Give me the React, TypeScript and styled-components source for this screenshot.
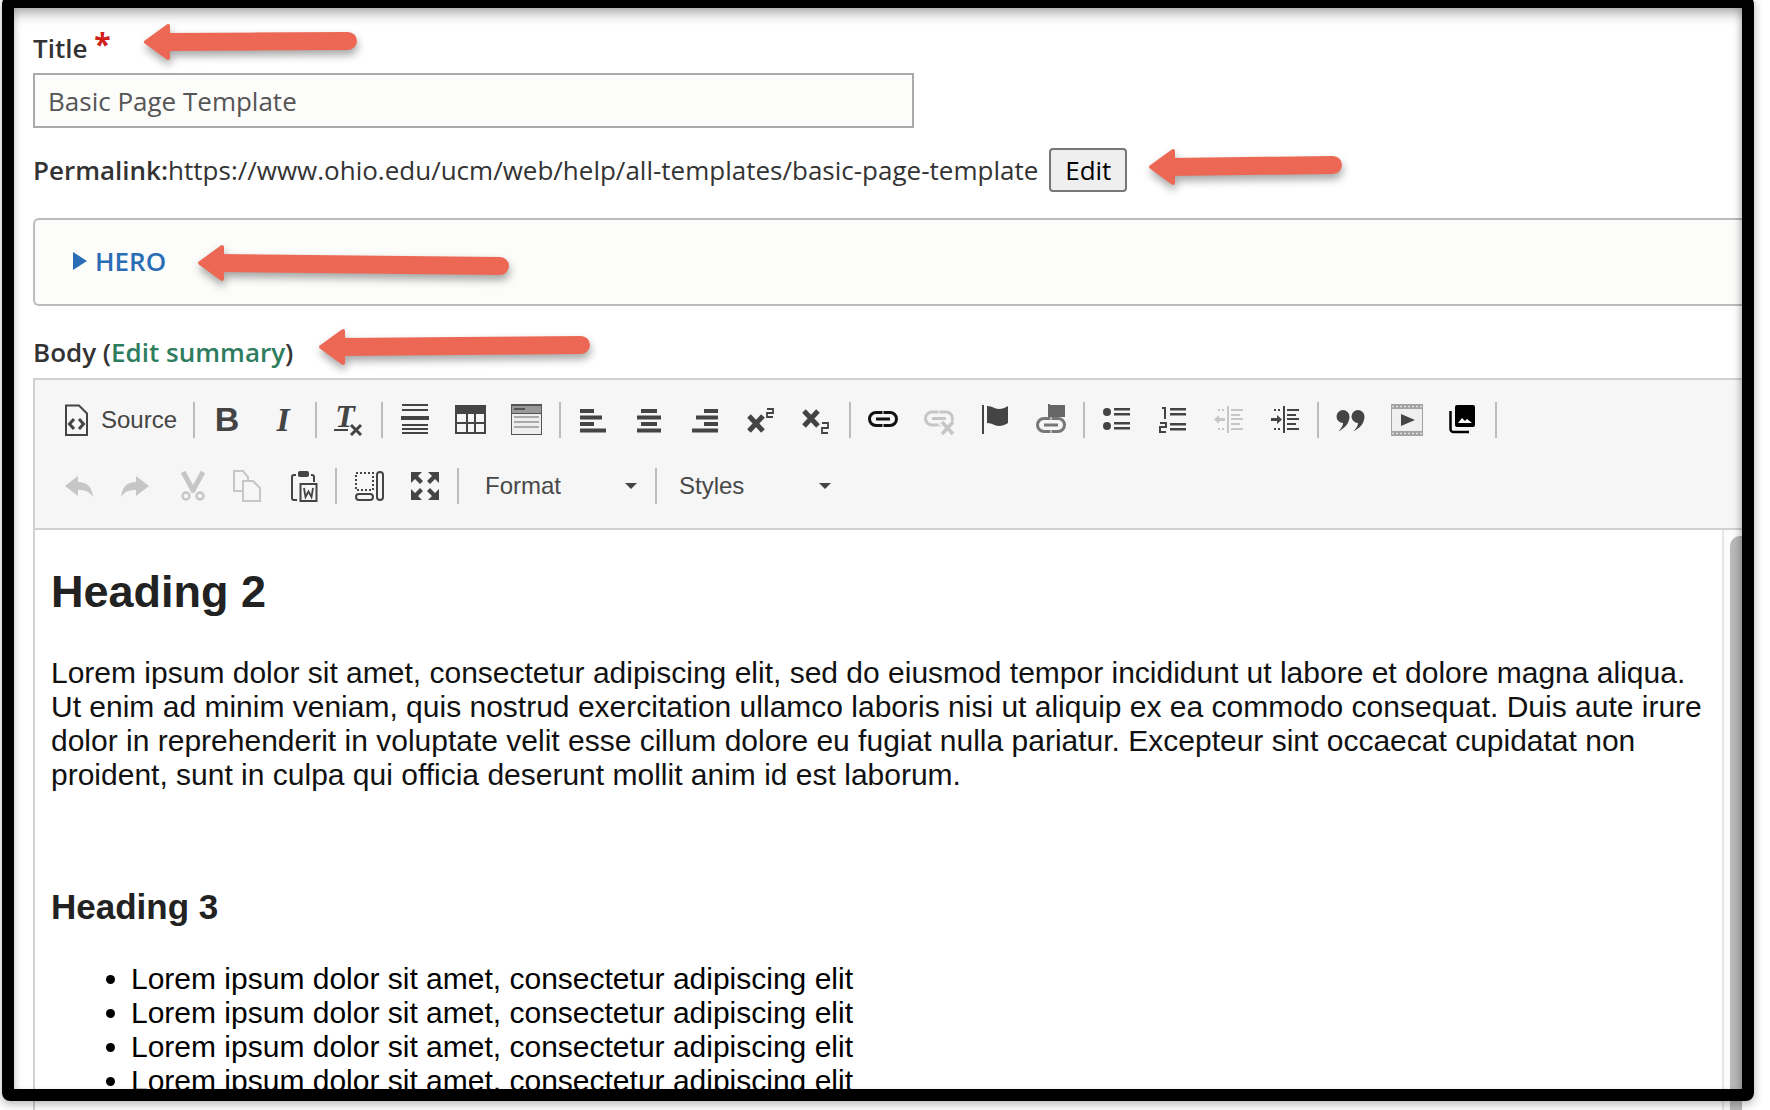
import React from 'react';
import styled, { createGlobalStyle } from 'styled-components';

const GlobalStyle = createGlobalStyle`
  html, body { margin: 0; padding: 0; background: #fff; }
`;

const UI_FONT = `"Open Sans", "Noto Sans", sans-serif`;
const EDITOR_FONT = `"Liberation Sans", Arial, sans-serif`;

type IconProps = { children: React.ReactNode };
const Svg = ({ children }: IconProps) => (
  <svg width="32" height="32" viewBox="0 0 32 32" fill="currentColor" aria-hidden="true">
    {children}
  </svg>
);
// taller box for the icons that hold a real letter, so the letter has room
const TallSvg = ({ children }: IconProps) => (
  <svg width="32" height="48" viewBox="0 -8 32 48" fill="currentColor" aria-hidden="true">
    {children}
  </svg>
);

const SourceIcon = () => (
  <Svg>
    <path d="M6 1.500h13l8 8V31H6z" fill="none" stroke="currentColor" strokeWidth="2" />
    <path d="M14 15l-4.500 5 4.500 5M19 15l4.500 5-4.500 5" fill="none" stroke="currentColor" strokeWidth="3" />
  </Svg>
);
const BoldIcon = () => (
  <TallSvg>
    <text x="16" y="27" textAnchor="middle" fontFamily={EDITOR_FONT} fontWeight="700" fontSize="34">B</text>
  </TallSvg>
);
const ItalicIcon = () => (
  <TallSvg>
    <text x="16" y="27" textAnchor="middle" fontFamily="'Liberation Serif', serif" fontWeight="700" fontStyle="italic" fontSize="34">I</text>
  </TallSvg>
);
const RemoveFormatIcon = () => (
  <TallSvg>
    <text x="12" y="23" textAnchor="middle" fontFamily="'Liberation Serif', serif" fontWeight="700" fontStyle="italic" fontSize="32">T</text>
    <rect x="1" y="25" width="14" height="2" />
    <path d="M18 21l10 10M28 21L18 31" stroke="currentColor" strokeWidth="3" fill="none" />
  </TallSvg>
);
const RuleIcon = () => (
  <Svg>
    <rect x="3" y="0" width="26" height="2" />
    <rect x="3" y="5" width="26" height="2" />
    <rect x="2" y="12" width="28" height="4" />
    <rect x="3" y="20" width="26" height="2" />
    <rect x="3" y="24" width="26" height="2" />
    <rect x="3" y="28" width="26" height="2" />
  </Svg>
);
const TableIcon = () => (
  <Svg>
    <path fillRule="evenodd" d="M0 1h31v29H0zM2 10v8h9v-8zM13 10v8h6v-8zM21 10v8h8v-8zM2 20v8h9v-8zM13 20v8h6v-8zM21 20v8h8v-8z" />
  </Svg>
);
const TemplateIcon = () => (
  <Svg>
    <rect x="0" y="0" width="31" height="31" fill="#555" />
    <rect x="1" y="2" width="29" height="7" fill="#999" />
    <rect x="3" y="4" width="11" height="2" fill="#555" />
    <rect x="1" y="10" width="29" height="20" fill="#eee" />
    <rect x="3" y="12" width="25" height="2" fill="#aaa" />
    <rect x="3" y="17" width="25" height="2" fill="#aaa" />
    <rect x="3" y="22" width="25" height="2" fill="#aaa" />
  </Svg>
);
const bars = (rows: [number, number][]) =>
  rows.map(([x, w], i) => <rect key={i} x={x} y={5 + i * 6.500} width={w} height="4" />);
const AlignLeftIcon = () => <Svg>{bars([[3, 14], [3, 22], [3, 14], [3, 26]])}</Svg>;
const AlignCenterIcon = () => <Svg>{bars([[8, 16], [4, 24], [8, 16], [4, 24]])}</Svg>;
const AlignRightIcon = () => <Svg>{bars([[15, 14], [7, 22], [15, 14], [3, 26]])}</Svg>;
const SupIcon = () => (
  <Svg>
    <path d="M4 12l14 15M18 12L4 27" stroke="currentColor" strokeWidth="5" fill="none" />
    <path d="M22 5h6v4h-6v4h6" stroke="currentColor" strokeWidth="1.800" fill="none" />
  </Svg>
);
const SubIcon = () => (
  <Svg>
    <path d="M3 7l14 15M17 7L3 22" stroke="currentColor" strokeWidth="5" fill="none" />
    <path d="M21 19h6v5h-6v5h6" stroke="currentColor" strokeWidth="1.800" fill="none" />
  </Svg>
);
const Chain = ({ y = 0 }: { y?: number }) => (
  <g transform={`translate(0 ${y})`} fill="none" stroke="currentColor">
    <path d="M15.500 9.500H9a6.500 6.500 0 0 0 0 13h6.500M16.500 9.500H23a6.500 6.500 0 0 1 0 13h-6.500" strokeWidth="3" />
    <path d="M9 16h14" strokeWidth="3" />
  </g>
);
const LinkIcon = () => (
  <Svg>
    <Chain y={-1} />
  </Svg>
);
const UnlinkIcon = () => (
  <Svg>
    <Chain y={-1.500} />
    <path d="M19 18l11 12M30 18L19 30" stroke="#f6f6f6" strokeWidth="7" />
    <path d="M19 18l11 12M30 18L19 30" stroke="currentColor" strokeWidth="3.500" />
  </Svg>
);
const FlagIcon = () => (
  <Svg>
    <rect x="3" y="1" width="2" height="29" />
    <path d="M8 2c6 0 7 3 12 3 3 0 6-1 9-3v17c-3 2-6 3-9 3-5 0-6-3-12-3z" />
  </Svg>
);
const AnchorLinkIcon = () => (
  <Svg>
    <rect x="13" y="0" width="2" height="14" fill="#666" />
    <path d="M15 1h15v12H15z" fill="#666" />
    <g color="#777">
      <Chain y={5} />
    </g>
  </Svg>
);
const BulletIcon = () => (
  <Svg>
    <circle cx="6" cy="8" r="4" />
    <circle cx="6" cy="22" r="4" />
    <rect x="13" y="4" width="16" height="2.500" />
    <rect x="13" y="9" width="16" height="2.500" />
    <rect x="13" y="18" width="16" height="2.500" />
    <rect x="13" y="23" width="16" height="2.500" />
  </Svg>
);
const NumberedIcon = () => (
  <Svg>
    <path d="M5 4h3v11" stroke="currentColor" strokeWidth="2" fill="none" />
    <path d="M3 19h6v4H3v5h6" stroke="currentColor" strokeWidth="2" fill="none" />
    <rect x="13" y="4" width="16" height="2.500" />
    <rect x="13" y="9" width="16" height="2.500" />
    <rect x="13" y="19" width="16" height="2.500" />
    <rect x="13" y="24" width="16" height="2.500" />
  </Svg>
);
const IndentLines = () => (
  <>
    <rect x="18" y="5" width="12" height="2" />
    <rect x="18" y="10" width="9" height="2" />
    <rect x="18" y="14" width="12" height="2" />
    <rect x="18" y="19" width="9" height="2" />
    <rect x="18" y="24" width="12" height="2" />
    <rect x="14" y="2" width="2" height="27" />
    <rect x="5" y="5" width="2" height="2" />
    <rect x="9" y="5" width="2" height="2" />
    <rect x="5" y="24" width="2" height="2" />
    <rect x="9" y="24" width="2" height="2" />
  </>
);
const OutdentIcon = () => (
  <Svg>
    <IndentLines />
    <path d="M12 14H6v-3l-5 4.500L6 20v-3h6z" />
  </Svg>
);
const IndentIcon = () => (
  <Svg>
    <IndentLines />
    <path d="M2 14h6v-3l5 4.500L8 20v-3H2z" />
  </Svg>
);
const QuoteIcon = () => (
  <Svg>
    <path d="M8 6a6.500 6.500 0 0 1 6.500 6.500c0 6.500-4.500 11.500-11 15 2.500-3 4.500-5.500 4.500-8.500a6.500 6.500 0 0 1 0-13z" />
    <path d="M23 6a6.500 6.500 0 0 1 6.500 6.500c0 6.500-4.500 11.500-11 15 2.500-3 4.500-5.500 4.500-8.500a6.500 6.500 0 0 1 0-13z" />
  </Svg>
);
const VideoIcon = () => (
  <Svg>
    <rect x="0" y="0" width="32" height="32" fill="#a3a3a3" />
    <rect x="1" y="5" width="30" height="22" fill="#efefef" />
    <path d="M10 10l14 6-14 6z" fill="#444" />
    <path d="M1 2.500h30M1 29.500h30" stroke="#dcdcdc" strokeWidth="1.500" strokeDasharray="2 2" />
  </Svg>
);
const ImageIcon = () => (
  <Svg>
    <path d="M10 1h16a2 2 0 0 1 2 2v18a2 2 0 0 1-2 2H10a2 2 0 0 1-2-2V3a2 2 0 0 1 2-2z" fill="#000" />
    <path d="M3.500 7v18a3 3 0 0 0 3 3H22" fill="none" stroke="#000" strokeWidth="2.500" />
    <path d="M11 19l4-5 3 3 2-2 5 4z" fill="#fff" />
  </Svg>
);
const UndoIcon = () => (
  <Svg>
    <path d="M15 6L2 16l13 10v-6c7 0 11 1 15 7-1-10-6-15-15-15z" />
  </Svg>
);
const RedoIcon = () => (
  <Svg>
    <path d="M17 6l13 10-13 10v-6c-7 0-11 1-15 7 1-10 6-15 15-15z" />
  </Svg>
);
const CutIcon = () => (
  <Svg>
    <g transform="translate(2 0)">
      <path d="M6 2l11 20M26 2L15 22" stroke="currentColor" strokeWidth="5" fill="none" />
      <circle cx="9" cy="26" r="3.500" fill="none" stroke="currentColor" strokeWidth="2.500" />
      <circle cx="23" cy="26" r="3.500" fill="none" stroke="currentColor" strokeWidth="2.500" />
    </g>
  </Svg>
);
const CopyIcon = () => (
  <Svg>
    <path d="M11 21H3V1h9l5 6v3" fill="none" stroke="currentColor" strokeWidth="2" />
    <path d="M12 11h10l7 7v13H12z" fill="none" stroke="currentColor" strokeWidth="2" />
  </Svg>
);
const PasteIcon = () => (
  <Svg>
    <path d="M9 5H7a2 2 0 0 0-2 2v21a2 2 0 0 0 2 2h3M24 5h1a2 2 0 0 1 2 2v5" fill="none" stroke="currentColor" strokeWidth="2" />
    <rect x="11" y="1" width="11" height="6" rx="2" />
    <rect x="13.500" y="14" width="16" height="17" fill="none" stroke="currentColor" strokeWidth="2" />
    <path d="M17 18l1.500 9 3-5.500 3 5.500 1.500-9" fill="none" stroke="currentColor" strokeWidth="1.800" />
  </Svg>
);
const BlocksIcon = () => (
  <Svg>
    <rect x="3" y="3" width="17" height="17" fill="none" stroke="currentColor" strokeWidth="2" strokeDasharray="2 2" />
    <rect x="24" y="2" width="6" height="28" rx="3" fill="none" stroke="currentColor" strokeWidth="2" />
    <rect x="3" y="24" width="17" height="6" rx="3" fill="none" stroke="currentColor" strokeWidth="2" />
  </Svg>
);
const MaximizeIcon = () => (
  <Svg>
    <path d="M2 2h11L9 6l5 5-3 3-5-5-4 4z" />
    <path d="M30 2H19l4 4-5 5 3 3 5-5 4 4z" />
    <path d="M2 30h11l-4-4 5-5-3-3-5 5-4-4z" />
    <path d="M30 30H19l4-4-5-5 3-3 5 5 4-4z" />
  </Svg>
);

type Tool = { icon: React.ComponentType; off?: boolean; dark?: boolean };

const rowOne: Tool[][] = [
  [{ icon: BoldIcon }, { icon: ItalicIcon }],
  [{ icon: RemoveFormatIcon }],
  [{ icon: RuleIcon }, { icon: TableIcon }, { icon: TemplateIcon }],
  [{ icon: AlignLeftIcon }, { icon: AlignCenterIcon }, { icon: AlignRightIcon }, { icon: SupIcon }, { icon: SubIcon }],
  [{ icon: LinkIcon, dark: true }, { icon: UnlinkIcon, off: true }, { icon: FlagIcon }, { icon: AnchorLinkIcon }],
  [{ icon: BulletIcon }, { icon: NumberedIcon }, { icon: OutdentIcon, off: true }, { icon: IndentIcon }],
  [{ icon: QuoteIcon }, { icon: VideoIcon }, { icon: ImageIcon }],
];

const rowTwo: Tool[][] = [
  [{ icon: UndoIcon, off: true }, { icon: RedoIcon, off: true }, { icon: CutIcon, off: true }, { icon: CopyIcon, off: true }, { icon: PasteIcon }],
  [{ icon: BlocksIcon }, { icon: MaximizeIcon }],
];

const paragraph =
  'Lorem ipsum dolor sit amet, consectetur adipiscing elit, sed do eiusmod tempor incididunt ut labore et dolore magna aliqua. Ut enim ad minim veniam, quis nostrud exercitation ullamco laboris nisi ut aliquip ex ea commodo consequat. Duis aute irure dolor in reprehenderit in voluptate velit esse cillum dolore eu fugiat nulla pariatur. Excepteur sint occaecat cupidatat non proident, sunt in culpa qui officia deserunt mollit anim id est laborum.';

const arrows = [
  { tip: [144, 42], tail: [348, 41] },
  { tip: [1149, 167], tail: [1333, 165] },
  { tip: [198, 263], tail: [500, 266] },
  { tip: [319, 347], tail: [581, 345] },
];

const ToolGroups = ({ groups }: { groups: Tool[][] }) => (
  <>
    {groups.map((group, g) => (
      <React.Fragment key={g}>
        {group.map(({ icon: Icon, off, dark }, i) => (
          <ToolButton key={i} $off={off} $dark={dark}>
            <Icon />
          </ToolButton>
        ))}
        <Separator />
      </React.Fragment>
    ))}
  </>
);

const App = () => (
  <Page>
    <GlobalStyle />
    <Sheet>
      <FieldLabel>
        Title <Required>*</Required>
      </FieldLabel>
      <TitleInput readOnly value="Basic Page Template" />
      <PermalinkRow>
        <strong>Permalink:</strong>
        <span>https://www.ohio.edu/ucm/web/help/all-templates/basic-page-template</span>
        <EditButton>Edit</EditButton>
      </PermalinkRow>
      <HeroBox>
        <HeroCaret />
        <HeroLink>HERO</HeroLink>
      </HeroBox>
      <BodyLabel>
        Body (<SummaryLink>Edit summary</SummaryLink>)
      </BodyLabel>
      <Editor>
        <Toolbar>
          <ToolRow>
            <SourceButton>
              <SourceIcon />
              <span>Source</span>
            </SourceButton>
            <Separator />
            <ToolGroups groups={rowOne} />
          </ToolRow>
          <ToolRow>
            <ToolGroups groups={rowTwo} />
            <Combo $width={188} $pad={22}>
              <span>Format</span>
              <ComboArrow />
            </Combo>
            <Separator />
            <Combo $width={184} $pad={18}>
              <span>Styles</span>
              <ComboArrow />
            </Combo>
          </ToolRow>
        </Toolbar>
        <EditArea>
          <Content>
            <Heading2>Heading 2</Heading2>
            <Paragraph>{paragraph}</Paragraph>
            <Heading3>Heading 3</Heading3>
            <List>
              {[0, 1, 2, 3].map((n) => (
                <li key={n}>Lorem ipsum dolor sit amet, consectetur adipiscing elit</li>
              ))}
            </List>
          </Content>
          <Scrollbar>
            <ScrollThumb />
          </Scrollbar>
        </EditArea>
      </Editor>
    </Sheet>
    <Frame />
    <Annotations width="1770" height="1110" viewBox="0 0 1770 1110">
      {arrows.map(({ tip, tail }, i) => (
        <g key={i}>
          <path
            d={`M${tip[0] + 20} ${tip[1]}L${tail[0]} ${tail[1]}`}
            stroke="#ec6855"
            strokeWidth="18"
            strokeLinecap="round"
          />
          <path
            d={`M${tip[0] + 2} ${tip[1]}L${tip[0] + 24} ${tip[1] - 16}V${tip[1] + 16}Z`}
            fill="#ec6855"
            stroke="#ec6855"
            strokeWidth="4"
            strokeLinejoin="round"
          />
        </g>
      ))}
    </Annotations>
  </Page>
);

export default App;

const Page = styled.div`
  position: relative;
  width: 1770px;
  height: 1110px;
  overflow: hidden;
  background: #fff;
`;

const Sheet = styled.div`
  width: 1742px;
  height: 1110px;
  box-sizing: border-box;
  padding-top: 29px;
  padding-left: 33px;
  display: flex;
  flex-direction: column;
  font-family: ${UI_FONT};
  color: #333;
  overflow: hidden;
`;

const FieldLabel = styled.label`
  font-size: 26px;
  font-weight: 600;
  line-height: 36px;
  margin-bottom: 7px;
`;

const Required = styled.span`
  color: #d0201a;
  font-size: 30px;
  font-weight: 700;
  position: relative;
  top: -3px;
`;

const TitleInput = styled.input`
  width: 881px;
  height: 55px;
  box-sizing: border-box;
  padding: 0 13px;
  border: 2px solid #aaa;
  background: #fcfcfa;
  color: #555;
  font-family: ${UI_FONT};
  font-size: 26px;
  outline: none;
`;

const PermalinkRow = styled.div`
  margin-top: 20px;
  height: 44px;
  display: flex;
  align-items: center;
  font-size: 26px;
  color: #333;
  white-space: nowrap;
  strong { font-weight: 600; }
`;

const EditButton = styled.button`
  margin-left: 11px;
  width: 78px;
  height: 44px;
  padding: 0;
  border: 2px solid #777;
  border-radius: 4px;
  background: #efefef;
  color: #000;
  font-family: ${UI_FONT};
  font-size: 26px;
`;

const HeroBox = styled.div`
  margin-top: 26px;
  height: 88px;
  box-sizing: border-box;
  padding: 0 0 3px 38px;
  display: flex;
  align-items: center;
  gap: 8px;
  background: #fcfcfa;
  border: 2px solid #bbb;
  border-right: 0;
  border-radius: 6px 0 0 6px;
`;

const HeroCaret = styled.span`
  width: 0;
  height: 0;
  border-left: 14px solid #2a6db5;
  border-top: 9px solid transparent;
  border-bottom: 9px solid transparent;
`;

const HeroLink = styled.span`
  color: #2a6db5;
  font-size: 26px;
  font-weight: 600;
`;

const BodyLabel = styled.div`
  margin-top: 28px;
  margin-bottom: 8px;
  font-size: 26px;
  font-weight: 600;
  line-height: 36px;
`;

const SummaryLink = styled.span`
  color: #2e7d5e;
`;

const Editor = styled.div`
  flex: 1;
  min-height: 0;
  display: flex;
  flex-direction: column;
  border-left: 2px solid #d1d1d1;
  border-top: 2px solid #d1d1d1;
`;

const Toolbar = styled.div`
  box-sizing: border-box;
  height: 150px;
  padding: 7px 0 0 16px;
  background: #f6f6f6;
  border-bottom: 2px solid #d1d1d1;
`;

const ToolRow = styled.div`
  height: 66px;
  display: flex;
  align-items: center;
`;

const ToolButton = styled.span<{ $off?: boolean; $dark?: boolean }>`
  width: 56px;
  flex: none;
  display: flex;
  align-items: center;
  justify-content: center;
  color: ${(p) => (p.$off ? '#c6c6c6' : p.$dark ? '#111' : '#444')};
`;

const SourceButton = styled.span`
  width: 138px;
  box-sizing: border-box;
  padding-left: 9px;
  display: flex;
  align-items: center;
  gap: 9px;
  color: #444;
  font-family: ${EDITOR_FONT};
  font-size: 24px;
`;

const Separator = styled.span`
  width: 2px;
  height: 36px;
  flex: none;
  margin: 0 4px;
  background: #bcbcbc;
`;

const Combo = styled.span<{ $width: number; $pad: number }>`
  width: ${(p) => p.$width}px;
  box-sizing: border-box;
  padding: 0 14px 0 ${(p) => p.$pad}px;
  display: flex;
  align-items: center;
  justify-content: space-between;
  color: #484848;
  font-family: ${EDITOR_FONT};
  font-size: 24px;
`;

const ComboArrow = styled.span`
  width: 0;
  height: 0;
  border-top: 6px solid #444;
  border-left: 6px solid transparent;
  border-right: 6px solid transparent;
`;

const EditArea = styled.div`
  flex: 1;
  min-height: 0;
  display: flex;
  overflow: hidden;
  background: #fff;
`;

const Content = styled.div`
  flex: 1;
  min-width: 0;
  padding: 36px 0 0 16px;
  font-family: ${EDITOR_FONT};
  color: #000;
`;

const Heading2 = styled.h2`
  margin: 0;
  font-size: 45px;
  line-height: 52px;
  font-weight: 700;
  color: #222;
`;

const Paragraph = styled.p`
  margin: 38px 0 0;
  font-size: 30px;
  line-height: 34px;
  color: #111;
  width: 1660px;
`;

const Heading3 = styled.h3`
  margin: 95px 0 0;
  font-size: 35px;
  line-height: 40px;
  font-weight: 700;
  color: #222;
`;

const List = styled.ul`
  margin: 35px 0 0;
  padding: 0 0 0 80px;
  font-size: 30px;
  line-height: 34px;
`;

const Scrollbar = styled.div`
  width: 20px;
  flex: none;
  box-sizing: border-box;
  padding: 6px 0 0 6px;
  background: #fcfcfc;
  border-left: 2px solid #e6e6e6;
`;

const ScrollThumb = styled.div`
  height: 100%;
  background: #b9b9b9;
  border-radius: 10px 0 0 0;
`;

const Frame = styled.div`
  position: absolute;
  top: -4px;
  left: 2px;
  width: 1752px;
  height: 1105px;
  box-sizing: border-box;
  border: 12px solid #000;
  border-radius: 8px;
  box-shadow:
    0 3px 10px rgba(0, 0, 0, 0.3),
    inset 0 10px 12px -4px rgba(0, 0, 0, 0.3),
    inset -6px 0 8px -5px rgba(0, 0, 0, 0.25),
    inset 5px 0 8px -5px rgba(0, 0, 0, 0.15);
  pointer-events: none;
`;

const Annotations = styled.svg`
  position: absolute;
  top: 0;
  left: 0;
  pointer-events: none;
  filter: drop-shadow(1px 5px 4px rgba(0, 0, 0, 0.35));
`;
